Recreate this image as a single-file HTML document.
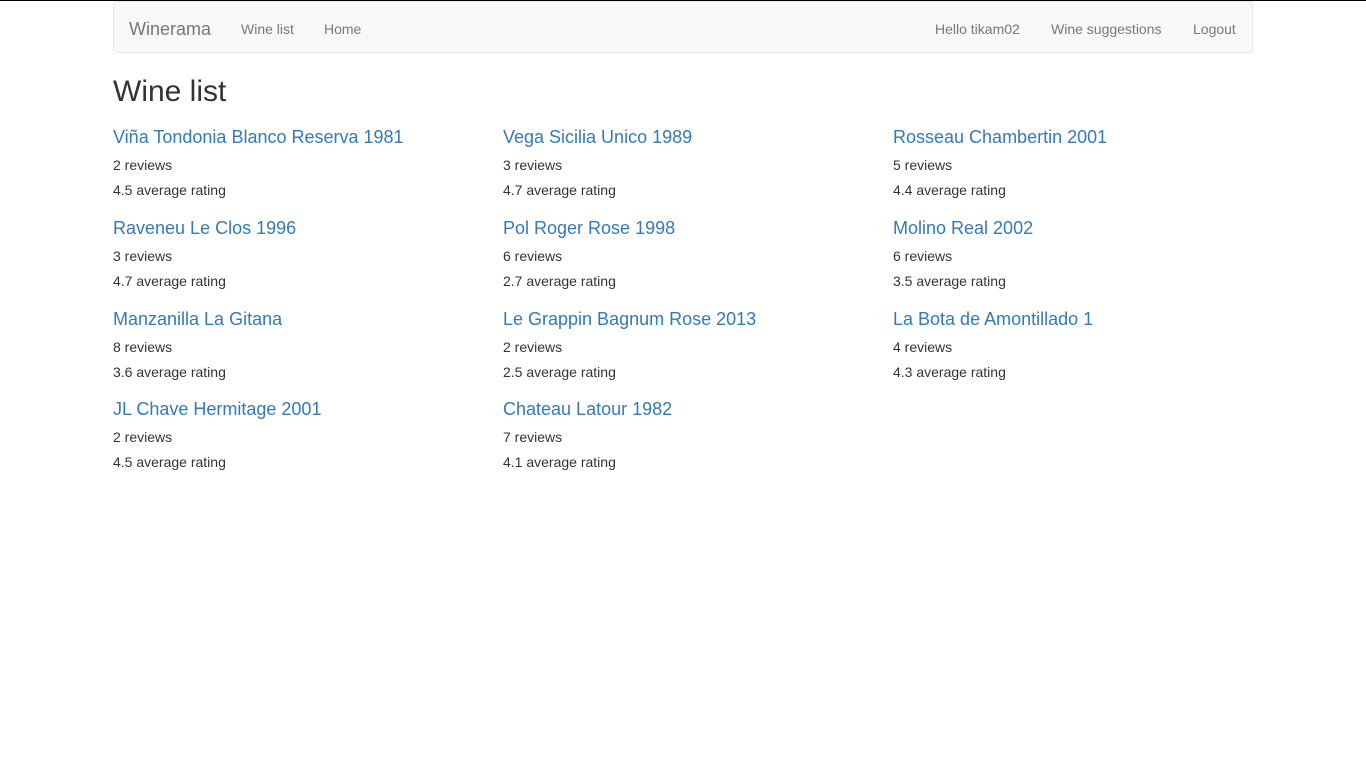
<!DOCTYPE html>
<html><head><style>
*{margin:0;padding:0;box-sizing:border-box}
body{width:1366px;height:768px;background:#fff;font-family:"Liberation Sans",sans-serif;color:#333;font-size:14px;position:relative;overflow:hidden;border-top:1px solid #000}
.nav{position:absolute;left:113px;top:0px;width:1140px;height:52px;background:#f8f8f8;border:1px solid #e7e7e7;border-radius:4px}
.nav span{position:absolute;top:1px;line-height:52px;color:#777;font-size:14px}
.nav .brand{font-size:18px;left:15px}
h1{position:absolute;left:113px;top:71px;font-size:30px;font-weight:500;line-height:40px}
.w{position:absolute;width:370px}
.w a{display:block;color:#337ab7;font-size:18px;line-height:20px;text-decoration:none}
.w p{line-height:20px;margin-top:8px}
.w p+p{margin-top:5px}
</style></head><body>
<div class="nav">
<span class="brand">Winerama</span>
<span style="left:127px">Wine list</span>
<span style="left:210px">Home</span>
<span style="left:821px">Hello tikam02</span>
<span style="left:937px">Wine suggestions</span>
<span style="left:1079px">Logout</span>
</div>
<h1>Wine list</h1>
<div class="w" style="left:113px;top:126px"><a>Viña Tondonia Blanco Reserva 1981</a><p>2 reviews</p><p>4.5 average rating</p></div>
<div class="w" style="left:503px;top:126px"><a>Vega Sicilia Unico 1989</a><p>3 reviews</p><p>4.7 average rating</p></div>
<div class="w" style="left:893px;top:126px"><a>Rosseau Chambertin 2001</a><p>5 reviews</p><p>4.4 average rating</p></div>
<div class="w" style="left:113px;top:217px"><a>Raveneu Le Clos 1996</a><p>3 reviews</p><p>4.7 average rating</p></div>
<div class="w" style="left:503px;top:217px"><a>Pol Roger Rose 1998</a><p>6 reviews</p><p>2.7 average rating</p></div>
<div class="w" style="left:893px;top:217px"><a>Molino Real 2002</a><p>6 reviews</p><p>3.5 average rating</p></div>
<div class="w" style="left:113px;top:308px"><a>Manzanilla La Gitana</a><p>8 reviews</p><p>3.6 average rating</p></div>
<div class="w" style="left:503px;top:308px"><a>Le Grappin Bagnum Rose 2013</a><p>2 reviews</p><p>2.5 average rating</p></div>
<div class="w" style="left:893px;top:308px"><a>La Bota de Amontillado 1</a><p>4 reviews</p><p>4.3 average rating</p></div>
<div class="w" style="left:113px;top:398px"><a>JL Chave Hermitage 2001</a><p>2 reviews</p><p>4.5 average rating</p></div>
<div class="w" style="left:503px;top:398px"><a>Chateau Latour 1982</a><p>7 reviews</p><p>4.1 average rating</p></div>
</body></html>
